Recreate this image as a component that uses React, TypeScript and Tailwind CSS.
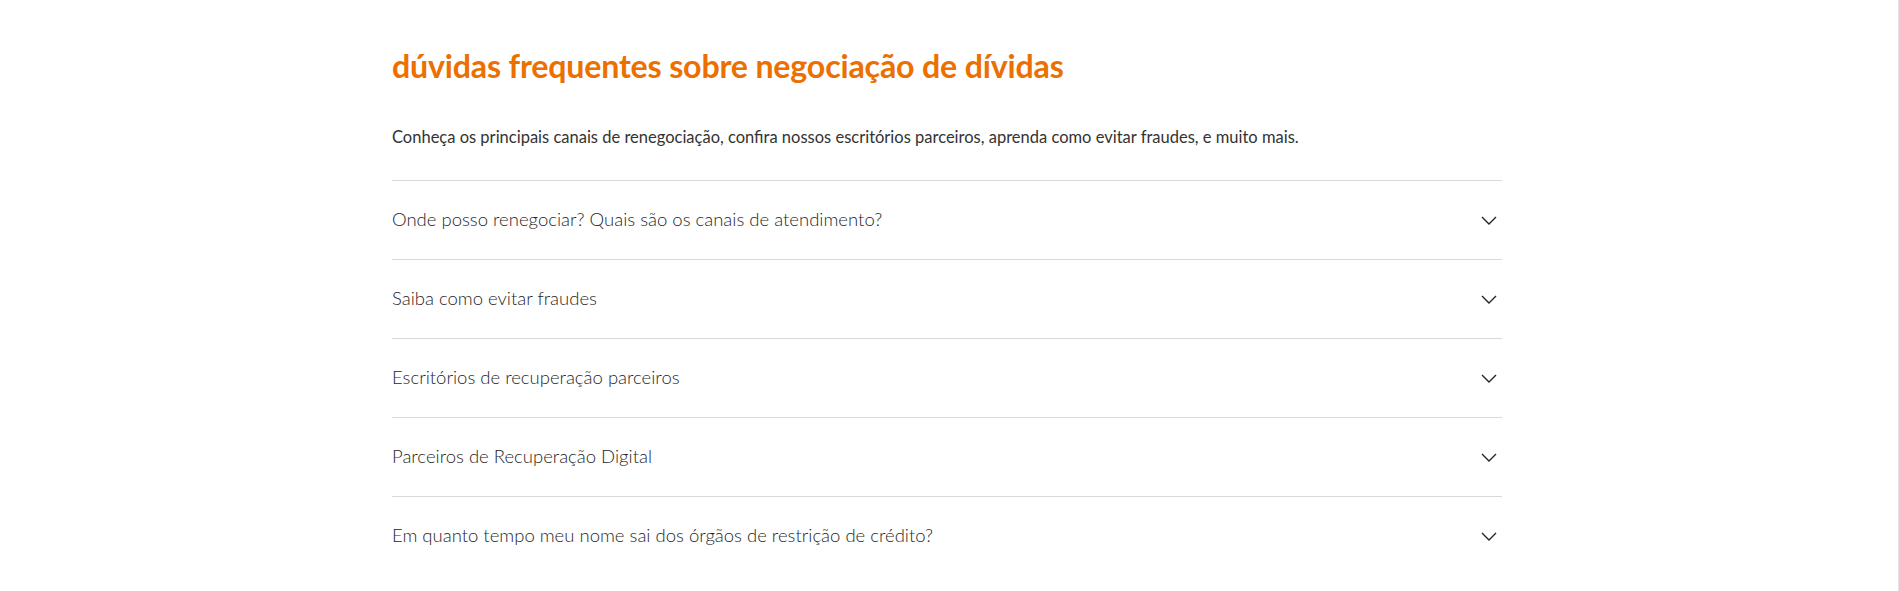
import React from "react";

const questions = [
  "Onde posso renegociar? Quais são os canais de atendimento?",
  "Saiba como evitar fraudes",
  "Escritórios de recuperação parceiros",
  "Parceiros de Recuperação Digital",
  "Em quanto tempo meu nome sai dos órgãos de restrição de crédito?",
];

function Chevron() {
  return (
    <svg width="16" height="9" viewBox="0 0 16 9" fill="none" className="shrink-0">
      <path d="M1 1l7 7 7-7" stroke="#252525" strokeWidth="1.4" />
    </svg>
  );
}

export default function App() {
  return (
    <div className="min-h-[591px] bg-white border-r border-[#e2e2e2] font-['Lato',sans-serif]">
      <div className="w-[1894px] h-[591px] overflow-hidden">
        <div className="mx-auto w-[1110px] pt-[46px]">
          <h2 className="text-[#ec7000] text-[32.2px] leading-[40px] font-bold tracking-[-0.2px]">
            dúvidas frequentes sobre negociação de dívidas
          </h2>
          <p className="mt-[41px] text-[#333333] text-[16.5px] leading-[20px]">
            Conheça os principais canais de renegociação, confira nossos escritórios parceiros, aprenda como evitar
            fraudes, e muito mais.
          </p>
          <div className="mt-[33px]">
            {questions.map((q, idx) => (
              <div
                key={idx}
                className="flex items-center justify-between h-[79px] border-t border-[#d9d9d9] pr-[5px]"
              >
                <span className="text-[#1f1f1f] text-[18.5px] font-light">{q}</span>
                <Chevron />
              </div>
            ))}
          </div>
        </div>
      </div>
    </div>
  );
}
